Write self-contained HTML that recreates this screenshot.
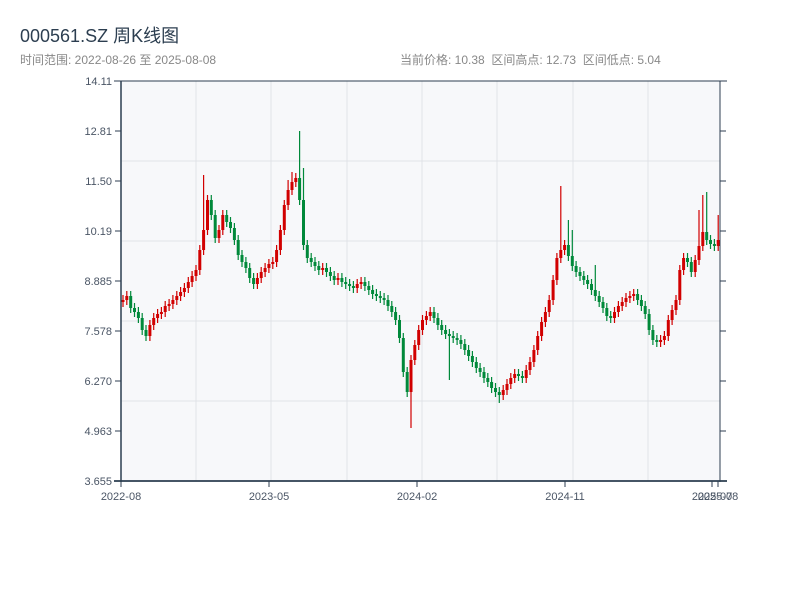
<!DOCTYPE html>
<html><head><meta charset="utf-8"><style>
body{margin:0;background:#fff;width:800px;height:600px;overflow:hidden;font-family:"Liberation Sans","Noto Sans CJK SC",sans-serif;position:relative}
.t{position:absolute;left:20px;top:22px;font-size:18px;color:#2c3e50}
.s{position:absolute;top:51px;font-size:12px;color:#888}
svg{position:absolute;left:0;top:0}
</style></head><body>
<div class="t">000561.SZ 周K线图</div>
<div class="s" style="left:20px">时间范围: 2022-08-26 至 2025-08-08</div>
<div class="s" style="left:400px">当前价格: 10.38&nbsp;&nbsp;区间高点: 12.73&nbsp;&nbsp;区间低点: 5.04</div>
<svg width="800" height="600" xmlns="http://www.w3.org/2000/svg" font-family="Liberation Sans, sans-serif">
<rect x="121" y="81" width="599" height="400" fill="#f7f8fa"/>
<g stroke="#e0e3e8" stroke-width="1">
<path d="M121 161H720M121 241H720M121 321H720M121 401H720M196 81V481M271 81V481M347 81V481M422 81V481M497 81V481M573 81V481M648 81V481"/>
</g>
<path fill="none" stroke="#d10000" stroke-width="1.2" d="M123 295V307M126.8 291V305M149.9 320V341M153.7 313V330M157.6 309V323M161.4 307V319M165.2 301V317M169.1 299V311M172.9 295V309M176.8 291V305M180.6 287V301M184.4 283V297M188.3 277V293M192.1 271V287M196 265V281M199.8 245V275M203.6 175V255M207.5 195V235M219 225V243M222.8 210V235M257.4 273V289M261.2 267V283M265.1 263V277M268.9 259V273M272.8 257V269M276.6 245V267M280.4 225V255M284.3 200V235M288.1 180V210M292 172V195M295.8 173V187M322.7 263V275M338 273V285M357.2 279V293M361.1 277V289M411 355V428M414.8 340V365M418.7 325V350M422.5 315V335M426.4 311V325M430.2 307V321M503.2 385V400M507 379V395M510.8 373V389M514.7 369V383M526.2 365V383M530 357V375M533.9 345V367M537.7 331V355M541.6 317V341M545.4 307V327M549.2 295V317M553.1 275V305M556.9 253V285M560.8 186V263M564.6 240V255M614.5 307V323M618.4 301V317M622.2 297V311M626 293V307M629.9 291V303M633.7 289V301M660.6 335V347M664.4 331V345M668.3 315V341M672.1 305V325M676 295V315M679.8 265V305M683.6 253V275M695.2 255V277M699 210V265M702.8 195V251M718.2 215V251"/>
<path fill="none" stroke="#d10000" stroke-width="3" d="M123 300V302M126.8 296V300M149.9 325V336M153.7 318V325M157.6 314V318M161.4 312V314M165.2 306V312M169.1 304V306M172.9 300V304M176.8 296V300M180.6 292V296M184.4 288V292M188.3 282V288M192.1 276V282M196 270V276M199.8 250V270M203.6 230V250M207.5 200V230M219 230V238M222.8 215V230M257.4 278V284M261.2 272V278M265.1 268V272M268.9 264V268M272.8 262V264M276.6 250V262M280.4 230V250M284.3 205V230M288.1 190V205M292 182V190M295.8 178V182M322.7 268V270M338 278V280M357.2 284V288M361.1 282V284M411 360V392M414.8 345V360M418.7 330V345M422.5 320V330M426.4 316V320M430.2 312V316M503.2 390V395M507 384V390M510.8 378V384M514.7 374V378M526.2 370V378M530 362V370M533.9 350V362M537.7 336V350M541.6 322V336M545.4 312V322M549.2 300V312M553.1 280V300M556.9 258V280M560.8 250V258M564.6 245V250M614.5 312V318M618.4 306V312M622.2 302V306M626 298V302M629.9 296V298M633.7 294V296M660.6 340V342M664.4 336V340M668.3 320V336M672.1 310V320M676 300V310M679.8 270V300M683.6 258V270M695.2 260V272M699 246V260M702.8 232V246M718.2 240V246"/>
<path fill="none" stroke="#00893a" stroke-width="1.2" d="M130.7 291V313M134.5 303V317M138.4 307V323M142.2 313V335M146 325V341M211.3 195V220M215.2 210V243M226.7 210V227M230.5 217V233M234.4 223V245M238.2 235V260M242 250V267M245.9 257V273M249.7 263V283M253.6 273V289M299.6 131V205M303.5 168V250M307.3 240V263M311.2 253V267M315 257V271M318.8 261V275M326.5 263V277M330.4 267V281M334.2 271V285M341.9 273V287M345.7 277V289M349.6 279V291M353.4 281V293M364.9 277V291M368.8 281V295M372.6 285V299M376.4 289V301M380.3 291V303M384.1 293V305M388 295V311M391.8 301V317M395.6 307V325M399.5 315V343M403.3 333V377M407.2 367V397M434 307V323M437.9 313V330M441.7 320V335M445.6 325V339M449.4 329V380M453.2 331V343M457.1 333V345M460.9 335V349M464.8 339V355M468.6 345V361M472.4 351V367M476.3 357V373M480.1 363V377M484 367V383M487.8 373V387M491.6 377V393M495.5 383V397M499.3 387V403M518.5 369V381M522.4 371V383M568.4 220V261M572.3 230V271M576.1 261V277M580 267V281M583.8 271V285M587.6 275V289M591.5 279V295M595.3 265V301M599.2 291V307M603 297V313M606.8 303V321M610.7 311V323M637.6 289V305M641.4 295V311M645.2 301V319M649.1 309V335M652.9 325V345M656.8 335V347M687.5 253V267M691.3 257V277M706.7 192V245M710.5 235V249M714.4 239V251"/>
<path fill="none" stroke="#00893a" stroke-width="3" d="M130.7 296V308M134.5 308V312M138.4 312V318M142.2 318V330M146 330V336M211.3 200V215M215.2 215V238M226.7 215V222M230.5 222V228M234.4 228V240M238.2 240V255M242 255V262M245.9 262V268M249.7 268V278M253.6 278V284M299.6 178V200M303.5 200V245M307.3 245V258M311.2 258V262M315 262V266M318.8 266V270M326.5 268V272M330.4 272V276M334.2 276V280M341.9 278V282M345.7 282V284M349.6 284V286M353.4 286V288M364.9 282V286M368.8 286V290M372.6 290V294M376.4 294V296M380.3 296V298M384.1 298V300M388 300V306M391.8 306V312M395.6 312V320M399.5 320V338M403.3 338V372M407.2 372V392M434 312V318M437.9 318V325M441.7 325V330M445.6 330V334M449.4 334V336M453.2 336V338M457.1 338V340M460.9 340V344M464.8 344V350M468.6 350V356M472.4 356V362M476.3 362V368M480.1 368V372M484 372V378M487.8 378V382M491.6 382V388M495.5 388V392M499.3 392V395M518.5 374V376M522.4 376V378M568.4 245V256M572.3 256V266M576.1 266V272M580 272V276M583.8 276V280M587.6 280V284M591.5 284V290M595.3 290V296M599.2 296V302M603 302V308M606.8 308V316M610.7 316V318M637.6 294V300M641.4 300V306M645.2 306V314M649.1 314V330M652.9 330V340M656.8 340V342M687.5 258V262M691.3 262V272M706.7 232V240M710.5 240V244M714.4 244V246"/>
<g stroke="#2c3e50" fill="none">
<path d="M121 81V482" stroke-width="1.5"/>
<path d="M720 81V482M114 81H727"/>
<path d="M114 481H727" stroke-width="1.8"/>
<path d="M115 81H121M115 131H121M115 181H121M115 231H121M115 281H121M115 331H121M115 381H121M115 431H121M115 481H121M720 81H726M720 131H726M720 181H726M720 231H726M720 281H726M720 331H726M720 381H726M720 431H726M720 481H726"/>
<path d="M121 481V487M269 481V487M417 481V487M565 481V487M712 481V487M718 481V487"/>
</g>
<g font-size="11" fill="#4a5565" text-anchor="end">
<text x="112" y="85">14.11</text><text x="112" y="135">12.81</text><text x="112" y="185">11.50</text><text x="112" y="235">10.19</text><text x="112" y="285">8.885</text><text x="112" y="335">7.578</text><text x="112" y="385">6.270</text><text x="112" y="435">4.963</text><text x="112" y="485">3.655</text>
</g>
<g font-size="11" fill="#4a5565" text-anchor="middle">
<text x="121" y="500">2022-08</text><text x="269" y="500">2023-05</text><text x="417" y="500">2024-02</text><text x="565" y="500">2024-11</text><text x="712" y="500">2025-07</text><text x="718" y="500">2025-08</text>
</g>
</svg>
</body></html>
